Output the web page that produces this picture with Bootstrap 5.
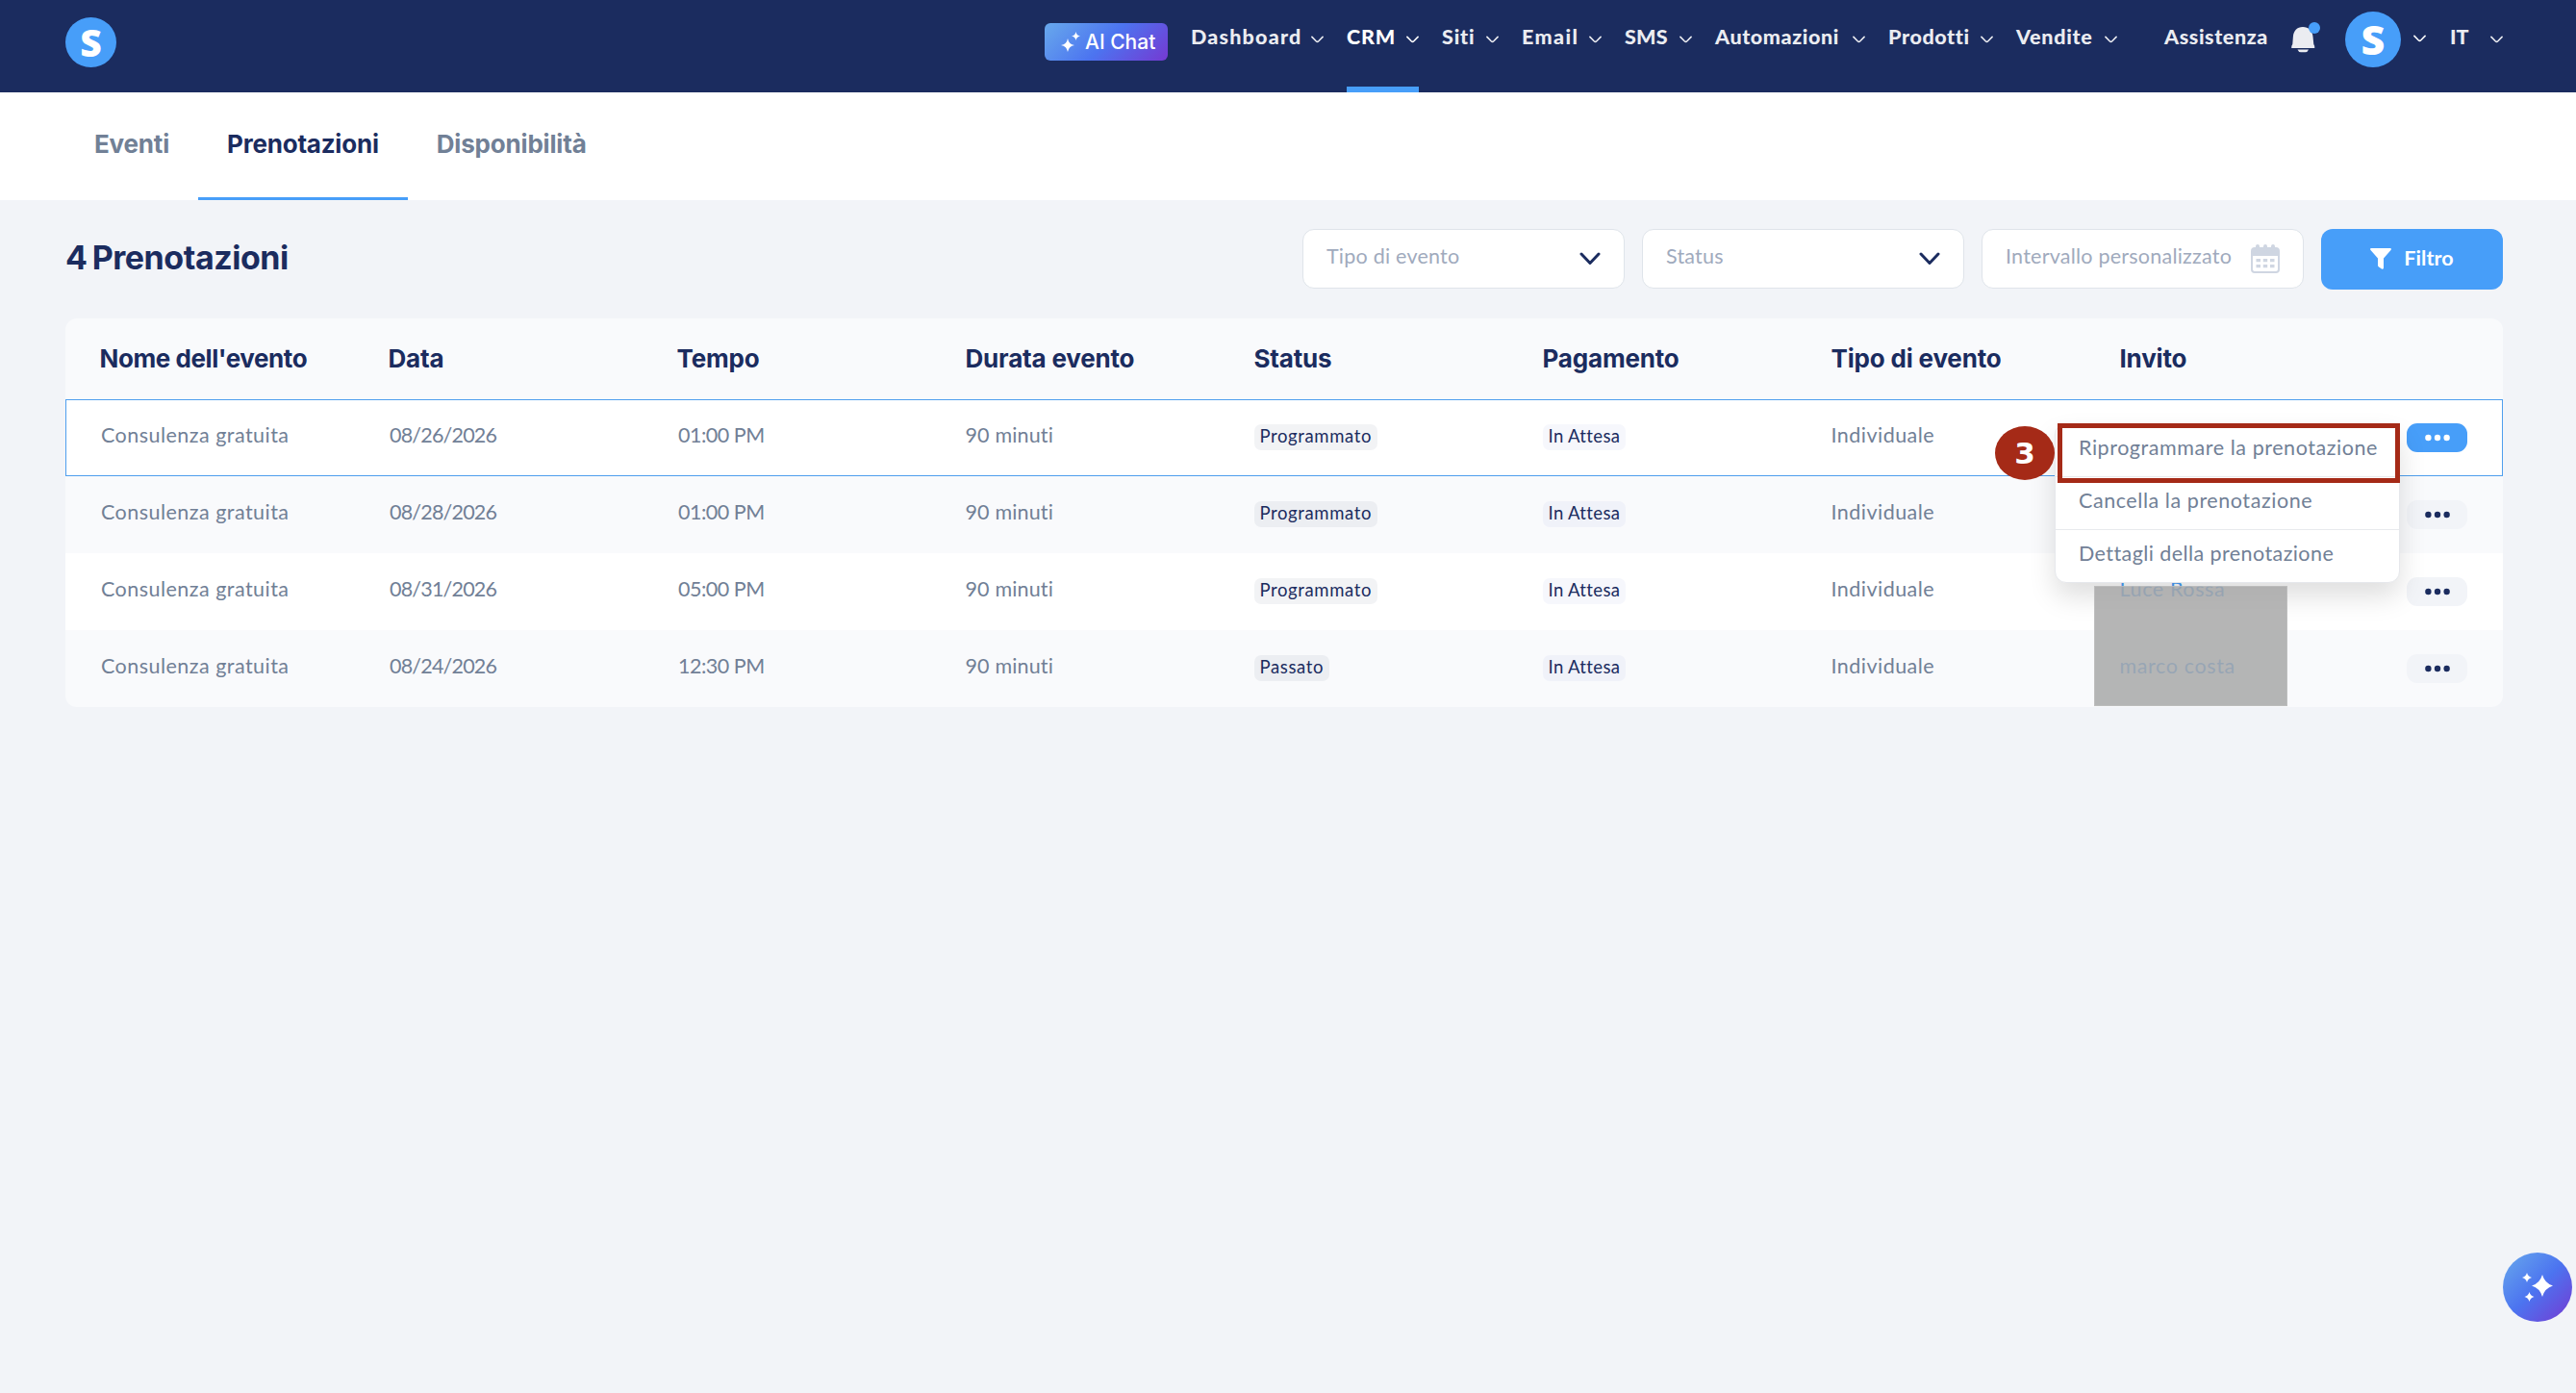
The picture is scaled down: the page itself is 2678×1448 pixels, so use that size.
<!DOCTYPE html>
<html lang="it">
<head>
<meta charset="utf-8">
<meta name="viewport" content="width=device-width, initial-scale=1">
<title>Prenotazioni</title>
<link href="https://cdn.jsdelivr.net/npm/bootstrap@5.3.0/dist/css/bootstrap.min.css" rel="stylesheet">
<style>
  :root { --navy: #1b2c5f; --sky: #479ef9; --slate: #718096; --page: #f2f4f8; }
  body { background: var(--page); color: var(--slate); font-family: Lato, sans-serif; font-size: 21.5px; line-height: 1.2; letter-spacing: .47px; min-height: 1448px; overflow: hidden; }
  svg { display: block; flex: none; }

  /* top bar */
  .topbar { height: 96px; background: var(--navy); padding: 0 76px 0 68px; }
  .brand-mark { margin-top: 18px; }
  .letter-s { font: 800 39px "Open Sans", "Noto Sans", sans-serif; fill: #fff; letter-spacing: 0; }
  .letter-s.big { font-size: 43px; }
  .ai-chat { margin: 24px 24px 0 0; width: 128px; height: 39px; padding: 0 0 0 17px; gap: 5px; border-radius: 6px; color: #fff; font: 500 21px/1 Inter, sans-serif; letter-spacing: 0; background: linear-gradient(135deg, #68a9ec 0%, #4c74f0 50%, #7539d2 100%); }
  .main-menu { gap: 24px; margin-right: 49px; }
  .top-item { height: 96px; padding: 0 0 18px; gap: 13px; color: #ebecf1; font-size: 21.5px; font-weight: 900; letter-spacing: .8px; text-decoration: none; white-space: nowrap; }
  .top-item .chev { margin-top: 3px; }
  .top-item.current { color: #fff; box-shadow: inset 0 -6px var(--sky); }
  .main-menu .top-item:nth-child(1) span { width: 112px; letter-spacing: 1.2px; }
  .main-menu .top-item:nth-child(2) span { width: 49px; }
  .main-menu .top-item:nth-child(3) span { width: 33px; }
  .main-menu .top-item:nth-child(4) span { width: 57px; letter-spacing: 1.4px; }
  .main-menu .top-item:nth-child(5) span { width: 44px; letter-spacing: .2px; }
  .main-menu .top-item:nth-child(6) span { width: 130px; letter-spacing: .6px; }
  .main-menu .top-item:nth-child(7) span { width: 83px; letter-spacing: .6px; }
  .main-menu .top-item:nth-child(8) span { width: 79px; letter-spacing: .7px; }
  .help-link { width: 107px; margin-right: 25px; letter-spacing: .6px; }
  .lang { margin-left: 25px; gap: 24px; letter-spacing: 0; }
  .lang span { width: 18px; }
  .bell { margin: 22px 25px 0 0; }
  .avatar { margin: 12px 13px 0 0; }
  .after-avatar { margin-top: 36px; }

  /* section tabs */
  .section-tabs { height: 112px; padding-left: 68px; background: #fff; }
  .section-tabs a { padding: 0 30px 5px; color: var(--slate); font: 700 26px/1.2 Inter, sans-serif; letter-spacing: -.18px; text-decoration: none; white-space: nowrap; }
  .section-tabs a.current { color: var(--navy); box-shadow: inset 0 -3px var(--sky); letter-spacing: -.22px; }

  /* heading and filters */
  .wrap-main { padding: 30px 76px 0 68px; }
  .filters { height: 63px; margin-bottom: 30px; }
  .page-title { margin: 0; padding-bottom: 2px; color: var(--navy); font: 700 34px/1.2 Inter, sans-serif; letter-spacing: -.45px; word-spacing: -2.5px; }
  .picker { width: 335px; height: 62px; margin-right: 18px; padding: 0 24px 4px 24px; border: 1px solid #dfe4ea; border-radius: 12px; background: #fff; color: #a0aabd; letter-spacing: .23px; white-space: nowrap; }
  .picker svg { margin-top: 4px; }
  .filter-btn { width: 189px; height: 63px; padding: 0 0 2px; gap: 13px; border: 0; border-radius: 12px; background: var(--sky); color: #fff; font-size: 21.5px; font-weight: 700; letter-spacing: .1px; }

  /* bookings table */
  .bookings-box { position: relative; }
  .bookings { width: 2534px; margin: 0; table-layout: fixed; border-collapse: separate; border-spacing: 0; border-radius: 12px; background: #f9fafc; color: var(--slate); }
  .bookings th, .bookings td { vertical-align: middle; white-space: nowrap; padding: 0 0 0 35.5px; }
  .bookings th { height: 84px; color: var(--navy); font: 700 26px/1.2 Inter, sans-serif; letter-spacing: -.18px; }
  .bookings th:first-child { letter-spacing: -.42px; }
  .bookings td { height: 80px; padding-bottom: 4px; padding-left: 37px; }
  .bookings td:nth-child(n+4) { padding-left: 35.5px; }
  .bookings tr.light { background: #fff; }
  .bookings tr.selected { box-shadow: inset 0 0 0 1px #4f9fee; }
  .bookings .date { letter-spacing: -.8px; }
  .bookings .time { letter-spacing: -.5px; }
  .bookings .dur { letter-spacing: .15px; }
  .bookings td.acts { position: relative; padding: 0 0 0 34px; }
  .tag { display: inline-block; height: 27px; padding: 0 6px; border-radius: 7px; background: rgba(30,50,80,.06); color: var(--navy); font-size: 18.5px; line-height: 25px; letter-spacing: .62px; vertical-align: middle; position: relative; top: 1px; }
  .tag.wait { background: rgba(80,100,200,.05); letter-spacing: .35px; }
  .guest { color: var(--sky); letter-spacing: .62px; }
  .more-btn { width: 63px; height: 30px; padding: 0; border: 0; border-radius: 11px; background: var(--page); color: var(--navy); }
  .more-btn.on { background: var(--sky); color: #fff; }

  /* overlays */
  .row-menu { position: absolute; z-index: 5; right: 107px; top: 25px; width: 359px; border: 1px solid #e6e8ec; border-radius: 12px; overflow: hidden; background: #fff; box-shadow: 0 14px 28px rgba(0,0,0,.13); letter-spacing: .56px; }
  .row-menu .menu-entry { height: 55px; padding: 0 0 4px 24px; color: var(--slate); text-decoration: none; }
  .row-menu .menu-entry:first-child { height: 54px; }
  .row-menu .menu-entry:last-child { letter-spacing: .42px; }
  .row-menu .menu-entry + .menu-entry { border-top: 1px solid #e8eaed; }
  .veil { position: absolute; z-index: 6; left: 2109px; top: 278px; width: 201px; height: 125px; background: rgba(167,167,167,.84); border: 1px solid rgba(200,200,200,.5); }
  .frame-red { position: absolute; z-index: 7; left: 2071px; top: 109px; width: 356px; height: 62px; border: 5px solid #a52a17; }
  .step { position: absolute; z-index: 7; left: 2006px; top: 112px; width: 62px; height: 56px; border-radius: 50%; background: #a52a17; color: #fff; font: 700 31px/1 "DejaVu Sans", sans-serif; letter-spacing: 0; }
  .fab { position: fixed; right: 4px; top: 1302px; width: 72px; height: 72px; border-radius: 50%; background: linear-gradient(135deg, #68a9ec 0%, #4c74f0 50%, #7539d2 100%); }
</style>
</head>
<body>
<svg width="0" height="0" class="position-absolute" aria-hidden="true">
  <symbol id="chev" viewBox="0 0 14 8"><path d="M1 1.2 5.6 5.9Q7 7.2 8.4 5.9L13 1.2" fill="none" stroke="currentColor" stroke-width="1.7" stroke-linecap="round"/></symbol>
  <symbol id="arrow" viewBox="0 0 22 14"><path d="M2 2 11 11.5 20 2" fill="none" stroke="#1b2c5f" stroke-width="3" stroke-linecap="round" stroke-linejoin="round"/></symbol>
  <symbol id="dots" viewBox="0 0 28 8"><circle cx="4.4" cy="4" r="3.2"/><circle cx="14" cy="4" r="3.2"/><circle cx="23.6" cy="4" r="3.2"/></symbol>
</svg>

<header class="topbar d-flex align-items-start justify-content-between">
  <a href="#" class="brand-mark"><svg width="53" height="52"><ellipse cx="26.5" cy="26" rx="26.5" ry="26" fill="#479ef9"/><text class="letter-s" x="26.5" y="40.5" text-anchor="middle">S</text></svg></a>
  <div class="d-flex align-items-start">
    <a href="#" class="ai-chat d-flex align-items-center text-decoration-none">
      <svg width="20" height="21" viewBox="0 0 20 21" fill="#fff"><path d="M7 7Q8 13 14 14 8 15 7 21 6 15 0 14 6 13 7 7ZM15.5 0Q16.2 4 20 4.6 16.2 5.2 15.5 9 14.8 5.2 11 4.6 14.8 4 15.5 0Z"/></svg>AI Chat</a>
    <nav class="main-menu d-flex">
      <a href="#" class="top-item d-flex align-items-center"><span>Dashboard</span><svg class="chev" width="13" height="8"><use href="#chev"/></svg></a>
      <a href="#" class="top-item current d-flex align-items-center"><span>CRM</span><svg class="chev" width="13" height="8"><use href="#chev"/></svg></a>
      <a href="#" class="top-item d-flex align-items-center"><span>Siti</span><svg class="chev" width="13" height="8"><use href="#chev"/></svg></a>
      <a href="#" class="top-item d-flex align-items-center"><span>Email</span><svg class="chev" width="13" height="8"><use href="#chev"/></svg></a>
      <a href="#" class="top-item d-flex align-items-center"><span>SMS</span><svg class="chev" width="13" height="8"><use href="#chev"/></svg></a>
      <a href="#" class="top-item d-flex align-items-center"><span>Automazioni</span><svg class="chev" width="13" height="8"><use href="#chev"/></svg></a>
      <a href="#" class="top-item d-flex align-items-center"><span>Prodotti</span><svg class="chev" width="13" height="8"><use href="#chev"/></svg></a>
      <a href="#" class="top-item d-flex align-items-center"><span>Vendite</span><svg class="chev" width="13" height="8"><use href="#chev"/></svg></a>
    </nav>
    <a href="#" class="top-item help-link d-flex align-items-center">Assistenza</a>
    <svg class="bell" width="31" height="33" viewBox="0 0 31 33"><path d="M12 6C18 6 22 10 22.5 16L23.3 24Q24.6 25.4 24.3 28H0.2Q0 25.4 1.3 24L1.9 16C2.4 10 6 6 12 6Z" fill="#ebecf1"/><path d="M6.5 29.5H18Q17 32.2 14.5 32.2H10Q7.500 32.200 6.500 29.500Z" fill="#ebecf1"/><circle cx="24" cy="7" r="6" fill="#479ef9"/></svg>
    <svg class="avatar" width="58" height="58"><circle cx="29" cy="29" r="29" fill="#479ef9"/><text class="letter-s big" x="29" y="44.500" text-anchor="middle">S</text></svg>
    <svg class="after-avatar text-white" width="13" height="8"><use href="#chev"/></svg>
    <a href="#" class="top-item lang d-flex align-items-center"><span>IT</span><svg class="chev" width="13" height="8"><use href="#chev"/></svg></a>
  </div>
</header>

<nav class="section-tabs d-flex">
  <a href="#" class="d-flex align-items-center">Eventi</a>
  <a href="#" class="current d-flex align-items-center">Prenotazioni</a>
  <a href="#" class="d-flex align-items-center">Disponibilità</a>
</nav>

<main class="wrap-main">
  <div class="filters d-flex align-items-center">
    <h1 class="page-title me-auto">4 Prenotazioni</h1>
    <div class="d-flex align-items-start">
      <div class="picker d-flex align-items-center justify-content-between">Tipo di evento<svg width="22" height="14"><use href="#arrow"/></svg></div>
      <div class="picker d-flex align-items-center justify-content-between">Status<svg width="22" height="14"><use href="#arrow"/></svg></div>
      <div class="picker d-flex align-items-center justify-content-between">Intervallo personalizzato<svg width="30" height="30" viewBox="0 0 30 30"><path d="M4 4H26Q29 4 29 7V26Q29 29 26 29H4Q1 29 1 26V7Q1 4 4 4Z" fill="#fff" stroke="#cfd6e2" stroke-width="2"/><path d="M1 6Q1 4 4 4H26Q29 4 29 6V12H1Z" fill="#cfd6e2"/><path d="M7 2V6M15 2V6M23 2V6" stroke="#cfd6e2" stroke-width="4" stroke-linecap="round"/><path d="M5.500 15H10V18.200H5.500ZM12.800 15H17.200V18.200H12.800ZM20 15H24.500V18.200H20ZM5.500 21H10V24.200H5.500ZM12.800 21H17.200V24.200H12.800ZM20 21H24.500V24.200H20Z" fill="#cfd6e2"/></svg></div>
      <button class="filter-btn btn d-flex align-items-center justify-content-center"><svg width="22" height="22" viewBox="0 0 22 22"><path d="M1 0H21Q22.500.4 21.500 2L14 10.500V20.500Q13.500 22.400 12 21.600L9 19.500Q8 18.800 8 17.500V10.500L.5 2Q-.5.4 1 0Z" fill="#fff"/></svg>Filtro</button>
    </div>
  </div>

  <div class="bookings-box">
    <table class="bookings">
      <colgroup><col width="300"><col width="300"><col width="300"><col width="300"><col width="300"><col width="300"><col width="300"><col width="300"><col width="134"></colgroup>
      <thead>
        <tr><th>Nome dell'evento</th><th>Data</th><th>Tempo</th><th>Durata evento</th><th>Status</th><th>Pagamento</th><th>Tipo di evento</th><th>Invito</th><th></th></tr>
      </thead>
      <tbody>
        <tr class="light selected">
          <td>Consulenza gratuita</td><td class="date">08/26/2026</td><td class="time">01:00 PM</td><td class="dur">90 minuti</td>
          <td><span class="tag">Programmato</span></td><td><span class="tag wait">In Attesa</span></td><td>Individuale</td><td></td>
          <td class="acts">
            <button class="more-btn on btn d-flex align-items-center justify-content-center"><svg width="28" height="8" fill="currentColor"><use href="#dots"/></svg></button>
            <div class="row-menu">
              <a href="#" class="menu-entry d-flex align-items-center">Riprogrammare la prenotazione</a>
              <a href="#" class="menu-entry d-flex align-items-center">Cancella la prenotazione</a>
              <a href="#" class="menu-entry d-flex align-items-center">Dettagli della prenotazione</a>
            </div>
          </td>
        </tr>
        <tr>
          <td>Consulenza gratuita</td><td class="date">08/28/2026</td><td class="time">01:00 PM</td><td class="dur">90 minuti</td>
          <td><span class="tag">Programmato</span></td><td><span class="tag wait">In Attesa</span></td><td>Individuale</td><td></td>
          <td class="acts"><button class="more-btn btn d-flex align-items-center justify-content-center"><svg width="28" height="8" fill="currentColor"><use href="#dots"/></svg></button></td>
        </tr>
        <tr class="light">
          <td>Consulenza gratuita</td><td class="date">08/31/2026</td><td class="time">05:00 PM</td><td class="dur">90 minuti</td>
          <td><span class="tag">Programmato</span></td><td><span class="tag wait">In Attesa</span></td><td>Individuale</td><td class="guest">Luce Rossa</td>
          <td class="acts"><button class="more-btn btn d-flex align-items-center justify-content-center"><svg width="28" height="8" fill="currentColor"><use href="#dots"/></svg></button></td>
        </tr>
        <tr>
          <td>Consulenza gratuita</td><td class="date">08/24/2026</td><td class="time">12:30 PM</td><td class="dur">90 minuti</td>
          <td><span class="tag">Passato</span></td><td><span class="tag wait">In Attesa</span></td><td>Individuale</td><td class="guest">marco costa</td>
          <td class="acts"><button class="more-btn btn d-flex align-items-center justify-content-center"><svg width="28" height="8" fill="currentColor"><use href="#dots"/></svg></button></td>
        </tr>
      </tbody>
    </table>
    <div class="veil"></div>
    <div class="frame-red"></div>
    <div class="step d-flex align-items-center justify-content-center">3</div>
  </div>
</main>

<a href="#" class="fab d-flex"><svg width="72" height="72" fill="#fff"><path d="M41 23Q43.500 32 52 34.500 43.500 37 41 46 38.500 37 30 34.500 38.500 32 41 23ZM25 21Q26 25 30 26 26 27 25 31 24 27 20 26 24 25 25 21ZM27.500 41Q28.500 45 32.500 46 28.500 47 27.500 51 26.500 47 22.500 46 26.500 45 27.500 41Z"/></svg></a>
<script src="https://cdn.jsdelivr.net/npm/bootstrap@5.3.0/dist/js/bootstrap.bundle.min.js"></script>
</body>
</html>
